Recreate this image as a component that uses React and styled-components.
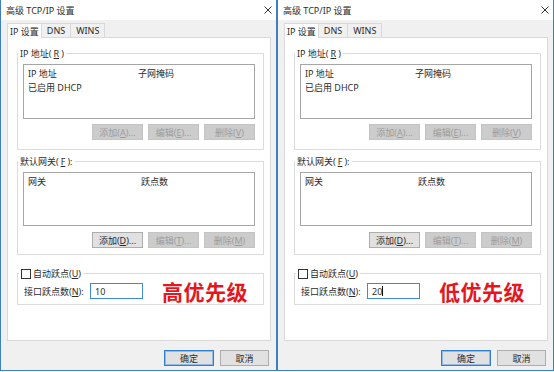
import React from 'react'
import styled, { createGlobalStyle } from 'styled-components'

const GlobalStyle = createGlobalStyle`
  html, body {
    margin: 0;
    padding: 0;
    background: #ffffff;
  }
  body {
    font-family: "Noto Sans", "Noto Sans CJK SC", sans-serif;
    font-size: 9px;
    color: #2b2b2b;
  }
`

const Page = styled.div`
  display: flex;
  width: 554px;
  height: 372px;
`

const Dialog = styled.div`
  width: 277px;
  height: 371px;
  box-sizing: border-box;
  border: 1px solid #3d7fc2;
  border-top: none;
  display: flex;
  flex-direction: column;
  background: #f0f0f0;
`

const TitleBar = styled.div`
  height: 20px;
  flex: none;
  background: #fff;
  display: flex;
  align-items: center;
  justify-content: space-between;
  padding: 0 4px 0 5px;
  font-size: 9px;
  line-height: 11px;
`

const Body = styled.div`
  flex: 1;
  display: flex;
  flex-direction: column;
  padding: 0 5px 0 6px;
`

const TabStrip = styled.div`
  display: flex;
  align-items: flex-end;
  height: 15px;
  margin-top: 2px;
`

const Tab = styled.div`
  height: ${p => (p.$active ? 15 : 14)}px;
  box-sizing: border-box;
  padding: 0 ${p => (p.$active ? 2 : 5)}px;
  border: 1px solid #d9d9d9;
  border-bottom: none;
  margin-left: ${p => (p.$active ? 0 : -1)}px;
  background: ${p => (p.$active ? '#fff' : '#f0f0f0')};
  display: flex;
  align-items: center;
  line-height: 11px;
  position: relative;
  z-index: ${p => (p.$active ? 2 : 1)};
  margin-bottom: ${p => (p.$active ? -1 : 0)}px;
  &:first-child {
    margin-left: 0;
  }
`

const Panel = styled.div`
  height: 304px;
  box-sizing: border-box;
  border: 1px solid #d9d9d9;
  background: #fff;
  padding: 10px 6px 0 9px;
  display: flex;
  flex-direction: column;
`

const Group = styled.fieldset`
  margin: ${p => p.$top || 0}px 0 0 0;
  min-width: 0;
  border: 1px solid #dcdcdc;
  padding: ${p => p.$pad || '5px 8px 9px 5px'};
  display: flex;
  flex-direction: column;
`

const Legend = styled.legend`
  margin-left: -5px;
  padding: 0 2px;
  font-size: 9px;
  line-height: 11px;
  display: flex;
  align-items: center;
  gap: 2px;
`

const ListBox = styled.div`
  height: ${p => p.$h}px;
  box-sizing: border-box;
  border: 1px solid #a6a6a6;
  background: #fff;
  padding: 1px 4px 0 4px;
  display: grid;
  grid-template-columns: ${p => p.$col}px 1fr;
  grid-auto-rows: 14px;
  align-items: center;
  align-content: start;
  line-height: 11px;
`

const ButtonRow = styled.div`
  display: flex;
  justify-content: flex-end;
  gap: 5px;
  margin-top: ${p => p.$gap}px;
`

const Button = styled.div`
  width: ${p => p.$w || 51}px;
  height: 16px;
  box-sizing: border-box;
  display: flex;
  align-items: center;
  justify-content: center;
  font-size: 9px;
  line-height: 11px;
  background: ${p => (p.$disabled ? '#cccccc' : '#e1e1e1')};
  border: 1px solid ${p => (p.$default ? '#2f7fd0' : p.$disabled ? '#c4c4c4' : '#adadad')};
  box-shadow: ${p => (p.$default ? 'inset 0 0 0 1px #8fbbe8' : 'none')};
  color: ${p => (p.$disabled ? '#9c9c9c' : '#2b2b2b')};
`

const CheckBox = styled.span`
  width: 10px;
  height: 10px;
  box-sizing: border-box;
  border: 1px solid #333;
  background: #fff;
  display: inline-block;
`

const MetricRow = styled.div`
  display: flex;
  align-items: center;
  height: 16px;
`

const FieldLabel = styled.span`
  width: 66px;
  flex: none;
  line-height: 11px;
`

const Input = styled.div`
  width: 53px;
  height: 16px;
  box-sizing: border-box;
  border: 1px solid #3f8ad6;
  background: #fff;
  padding-left: 4px;
  display: flex;
  align-items: center;
  line-height: 11px;
`

const Caret = styled.span`
  width: 1px;
  height: 10px;
  background: #111;
  display: inline-block;
`

const Note = styled.span`
  margin-left: 19px;
  font-family: "Noto Sans CJK SC", sans-serif;
  font-weight: 700;
  font-size: 21px;
  line-height: 16px;
  color: #e5161d;
  letter-spacing: 0.5px;
`

const Footer = styled.div`
  display: flex;
  justify-content: flex-end;
  gap: 6px;
  padding: 9px 2px 0 0;
`

const CloseIcon = () => (
  <svg width="8" height="8" viewBox="0 0 8 8">
    <path d="M0.5 0.5 L7.5 7.5 M7.5 0.5 L0.5 7.5" stroke="#333" strokeWidth="1" fill="none" />
  </svg>
)

function TcpIpDialog({ metric, caret, note }) {
  return (
    <Dialog>
      <TitleBar>
        <span>高级 TCP/IP 设置</span>
        <CloseIcon />
      </TitleBar>
      <Body>
        <TabStrip>
          <Tab $active>IP 设置</Tab>
          <Tab>DNS</Tab>
          <Tab>WINS</Tab>
        </TabStrip>
        <Panel>
          <Group>
            <Legend>IP 地址(<u>R</u>)</Legend>
            <ListBox $h={55} $col={110}>
              <span>IP 地址</span>
              <span>子网掩码</span>
              <span>已启用 DHCP</span>
            </ListBox>
            <ButtonRow $gap={5}>
              <Button $disabled>添加(<u>A</u>)...</Button>
              <Button $disabled>编辑(<u>E</u>)...</Button>
              <Button $disabled>删除(<u>V</u>)</Button>
            </ButtonRow>
          </Group>
          <Group $top={6} $pad="5px 8px 6px 5px">
            <Legend>默认网关(<u>F</u>):</Legend>
            <ListBox $h={54} $col={113}>
              <span>网关</span>
              <span>跃点数</span>
            </ListBox>
            <ButtonRow $gap={6}>
              <Button>添加(<u>D</u>)...</Button>
              <Button $disabled>编辑(<u>T</u>)...</Button>
              <Button $disabled>删除(<u>M</u>)</Button>
            </ButtonRow>
          </Group>
          <Group $top={13} $pad="4px 8px 5px 6px">
            <Legend>
              <CheckBox />
              <span>自动跃点(<u>U</u>)</span>
            </Legend>
            <MetricRow>
              <FieldLabel>接口跃点数(<u>N</u>):</FieldLabel>
              <Input>
                {metric}
                {caret && <Caret />}
              </Input>
              <Note>{note}</Note>
            </MetricRow>
          </Group>
        </Panel>
        <Footer>
          <Button $w={50} $default>确定</Button>
          <Button $w={49}>取消</Button>
        </Footer>
      </Body>
    </Dialog>
  )
}

export default function App() {
  return (
    <>
      <GlobalStyle />
      <Page>
        <TcpIpDialog metric="10" note="高优先级" />
        <TcpIpDialog metric="20" caret note="低优先级" />
      </Page>
    </>
  )
}
